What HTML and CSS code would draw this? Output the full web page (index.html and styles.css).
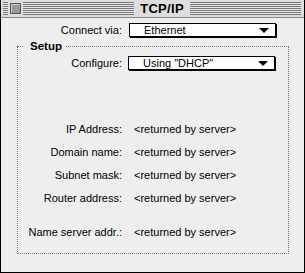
FILE: index.html
```html
<!DOCTYPE html>
<html lang="en">
<head>
  <meta charset="UTF-8">
  <title>TCP/IP</title>
  <link rel="stylesheet" href="styles.css">
</head>
<body>
  <div class="window">
    <div class="titlebar">
      <span class="stripes stripes-short"></span>
      <span class="close-box"></span>
      <span class="stripes"></span>
      <span class="title">TCP/IP</span>
      <span class="stripes"></span>
    </div>

    <div class="row connect-row">
      <span class="label">Connect via:</span>
      <div class="popup"><span>Ethernet</span><i class="arrow"></i></div>
    </div>

    <fieldset class="setup">
      <legend>Setup</legend>
      <div class="row configure-row">
        <span class="label">Configure:</span>
        <div class="popup"><span>Using "DHCP"</span><i class="arrow"></i></div>
      </div>

      <div class="info">
        <div class="row"><span class="label">IP Address:</span><span class="value">&lt;returned by server&gt;</span></div>
        <div class="row"><span class="label">Domain name:</span><span class="value">&lt;returned by server&gt;</span></div>
        <div class="row"><span class="label">Subnet mask:</span><span class="value">&lt;returned by server&gt;</span></div>
        <div class="row"><span class="label">Router address:</span><span class="value">&lt;returned by server&gt;</span></div>
        <div class="row ns-row"><span class="label">Name server addr.:</span><span class="value">&lt;returned by server&gt;</span></div>
      </div>
    </fieldset>
  </div>
</body>
</html>
```

FILE: styles.css
```css
/* classic control panel window */
body {
  margin: 0;
  font-family: 'Liberation Sans', Arial, sans-serif;
  font-size: 11px;
  color: #000;
  background: #eeeeee;
}

.window {
  width: 305px;
  height: 273px;
  box-sizing: border-box;
  border: 1px solid #000;
  border-top: none;
  background: #eeeeee;
}

.titlebar {
  height: 18px;
  box-sizing: border-box;
  display: flex;
  align-items: center;
  padding: 0 3px 0 2px;
  background: #dddddd;
  border-bottom: 1px solid #888;
}

.stripes {
  flex: 1;
  height: 13px;
  background: repeating-linear-gradient(#777 0 1px, #e8e8e8 1px 2px);
}

.stripes-short {
  flex: none;
  width: 5px;
}

.close-box {
  width: 11px;
  height: 11px;
  box-sizing: border-box;
  border: 1px solid #555;
  background: #999;
  box-shadow: inset 1px 1px 0 #ccc;
  margin: 0 2px;
}

.title {
  font-weight: bold;
  font-size: 13px;
  padding: 0 6px;
  letter-spacing: 0.3px;
}

.row {
  display: flex;
  align-items: center;
}

.label {
  text-align: right;
  flex-shrink: 0;
}

.popup {
  width: 147px;
  height: 14px;
  box-sizing: border-box;
  border: 1px solid #000;
  background: #fff;
  box-shadow: 1px 1px 0 #000;
  display: flex;
  align-items: center;
  justify-content: space-between;
  padding: 0 6px 0 14px;
}

.arrow {
  width: 0;
  height: 0;
  border-left: 5px solid transparent;
  border-right: 5px solid transparent;
  border-top: 5px solid #000;
}

.connect-row {
  margin-top: 5px;
}

.connect-row .label {
  width: 121px;
  margin-right: 7px;
}

.setup {
  margin: 3px 0 0 16px;
  width: 272px;
  height: 214px;
  box-sizing: border-box;
  border: 1px dotted #777;
  padding: 0;
}

.setup legend {
  font-weight: bold;
  font-size: 11.5px;
  margin-left: 5px;
  padding: 0 4px 0 7px;
}

.configure-row {
  margin-top: 4px;
}

.setup .label {
  width: 104px;
  margin-right: 6px;
}

.info {
  margin-top: 47px;
}

.info .row {
  height: 23px;
}

.info .label {
  margin-right: 12px;
}

.info .ns-row {
  margin-top: 11px;
}
```
